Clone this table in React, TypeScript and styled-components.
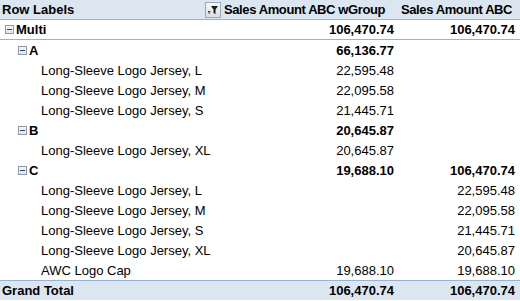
import React from "react";
import styled, { createGlobalStyle } from "styled-components";

const Global = createGlobalStyle`
  html, body { margin: 0; padding: 0; background: #fff; }
  body { font-family: "Liberation Sans", Arial, sans-serif; font-size: 13px; color: #000; }
`;

const Grid = styled.div`
  display: grid;
  grid-template-columns: 222px 177px 121px;
  width: 520px;
`;

type RowKind = "header" | "total" | "top" | "group" | "plain";

const Row = styled.div<{ $kind: RowKind }>`
  display: contents;
  & > div {
    height: 20px;
    box-sizing: border-box;
    background: ${(p) => (p.$kind === "header" || p.$kind === "total" ? "#dce6f1" : "#fff")};
    font-weight: ${(p) => (p.$kind === "plain" ? "normal" : "bold")};
    border-bottom: ${(p) => (p.$kind === "header" || p.$kind === "top" ? "1px solid #95b3d7" : "none")};
    border-top: ${(p) => (p.$kind === "total" ? "1px solid #95b3d7" : "none")};
  }
`;

const LabelCell = styled.div<{ $indent: number }>`
  display: flex;
  align-items: center;
  padding-left: ${(p) => p.$indent}px;
  white-space: nowrap;
  position: relative;
`;

const NumCell = styled.div`
  display: flex;
  align-items: center;
  justify-content: flex-end;
  padding-right: 5px;
  white-space: nowrap;
`;

const HeadCell = styled.div`
  display: flex;
  align-items: center;
  white-space: nowrap;
  padding-left: 2px;
  letter-spacing: -0.4px;
`;

const Toggle = styled.span`
  display: inline-flex;
  align-items: center;
  justify-content: center;
  width: 9px;
  height: 9px;
  box-sizing: border-box;
  border: 1px solid #8e9aab;
  background: linear-gradient(#f4f6f9, #dfe5ee);
  margin-right: 2px;
  &::after {
    content: "";
    width: 5px;
    height: 1px;
    background: #3a4350;
  }
`;

const FilterBtn = styled.span`
  position: absolute;
  right: 1px;
  top: 2px;
  width: 16px;
  height: 16px;
  box-sizing: border-box;
  border: 1px solid #9ea8b5;
  background: linear-gradient(#f6f7f9, #dcdfe4);
  display: flex;
  align-items: center;
  justify-content: center;
`;

type Line = { kind: RowKind; label: string; level: number; a?: string; b?: string };

const lines: Line[] = [
  { kind: "top", label: "Multi", level: 0, a: "106,470.74", b: "106,470.74" },
  { kind: "group", label: "A", level: 1, a: "66,136.77" },
  { kind: "plain", label: "Long-Sleeve Logo Jersey, L", level: 2, a: "22,595.48" },
  { kind: "plain", label: "Long-Sleeve Logo Jersey, M", level: 2, a: "22,095.58" },
  { kind: "plain", label: "Long-Sleeve Logo Jersey, S", level: 2, a: "21,445.71" },
  { kind: "group", label: "B", level: 1, a: "20,645.87" },
  { kind: "plain", label: "Long-Sleeve Logo Jersey, XL", level: 2, a: "20,645.87" },
  { kind: "group", label: "C", level: 1, a: "19,688.10", b: "106,470.74" },
  { kind: "plain", label: "Long-Sleeve Logo Jersey, L", level: 2, b: "22,595.48" },
  { kind: "plain", label: "Long-Sleeve Logo Jersey, M", level: 2, b: "22,095.58" },
  { kind: "plain", label: "Long-Sleeve Logo Jersey, S", level: 2, b: "21,445.71" },
  { kind: "plain", label: "Long-Sleeve Logo Jersey, XL", level: 2, b: "20,645.87" },
  { kind: "plain", label: "AWC Logo Cap", level: 2, a: "19,688.10", b: "19,688.10" },
];

const indents = [5, 18, 41];

export default function App() {
  return (
    <>
      <Global />
      <Grid>
        <Row $kind="header">
          <LabelCell $indent={2}>
            Row Labels
            <FilterBtn>
              <svg width="12" height="12" viewBox="0 0 12 12">
                <path d="M4 2 H11 L8.5 5.5 V10 L6.5 9 V5.5 Z" fill="#1b1b1b" />
                <rect x="1" y="7" width="2.2" height="1" fill="#333" />
                <path d="M0.8 8.5 H3.6 L2.2 10 Z" fill="#333" />
              </svg>
            </FilterBtn>
          </LabelCell>
          <HeadCell>Sales Amount ABC wGroup</HeadCell>
          <HeadCell>Sales Amount ABC</HeadCell>
        </Row>
        {lines.map((l, i) => (
          <Row key={i} $kind={l.kind}>
            <LabelCell $indent={indents[l.level]}>
              {l.kind !== "plain" && <Toggle />}
              {l.label}
            </LabelCell>
            <NumCell>{l.a ?? ""}</NumCell>
            <NumCell>{l.b ?? ""}</NumCell>
          </Row>
        ))}
        <Row $kind="total">
          <LabelCell $indent={2}>Grand Total</LabelCell>
          <NumCell>106,470.74</NumCell>
          <NumCell>106,470.74</NumCell>
        </Row>
      </Grid>
    </>
  );
}
